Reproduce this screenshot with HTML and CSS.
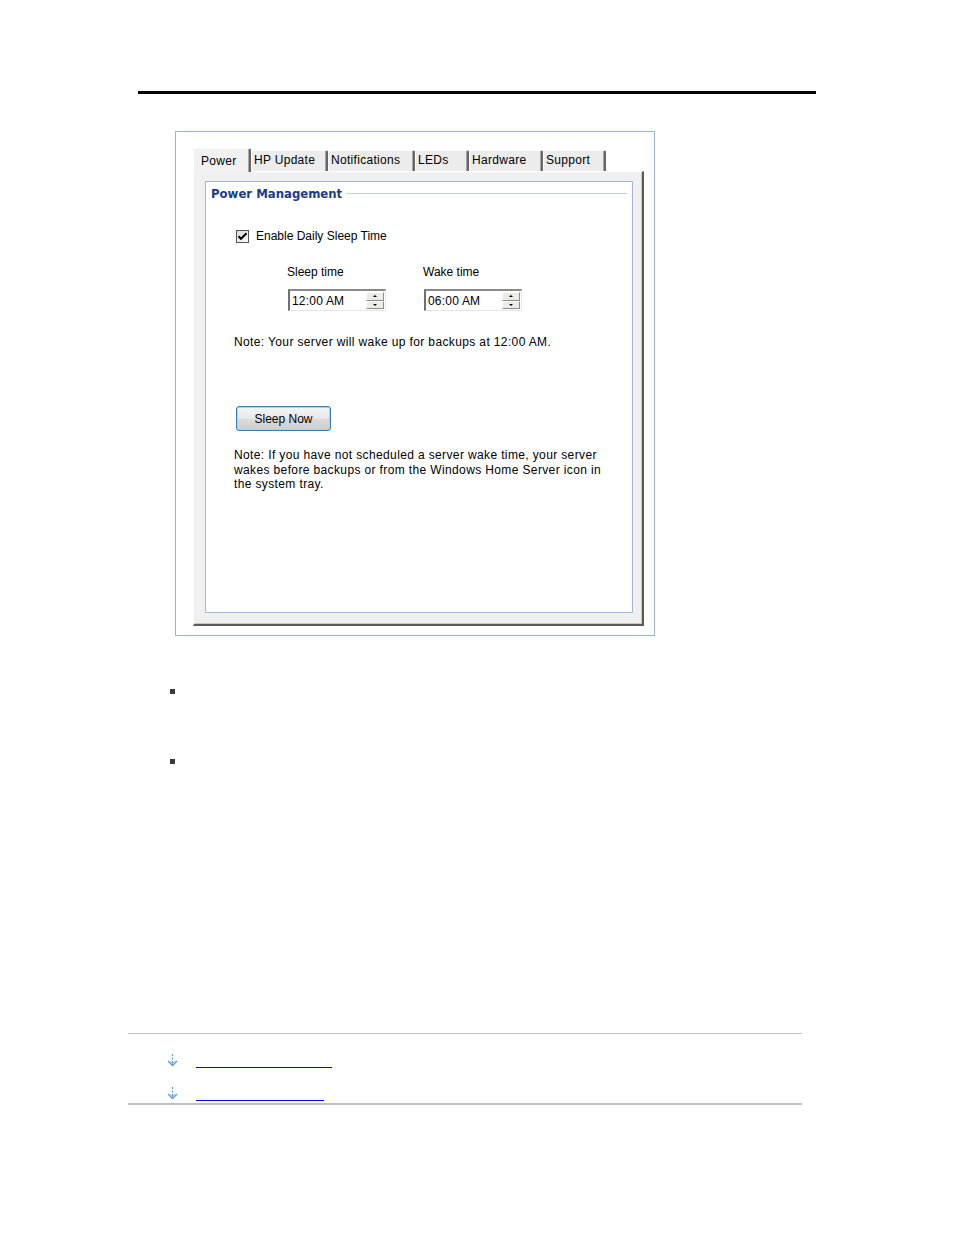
FILE: index.html
```html
<!DOCTYPE html>
<html>
<head>
<meta charset="utf-8">
<link rel="stylesheet" href="styles.css">
</head>
<body>
<div class="top-rule"></div>

<div class="shot">
  <div class="tabs">
    <div class="tab tab-active tab-power">Power</div>
    <div class="tab tab-hp">HP Update</div>
    <div class="tab tab-notif">Notifications</div>
    <div class="tab tab-leds">LEDs</div>
    <div class="tab tab-hw">Hardware</div>
    <div class="tab tab-sup">Support</div>
  </div>
  <div class="panel">
    <div class="group">
      <div class="group-title"><span class="group-title-text">Power Management</span><span class="group-title-line"></span></div>

      <div class="check-row">
        <span class="checkbox">
          <svg width="11" height="11" viewBox="0 0 11 11"><path d="M1.5 5.2 L4 7.8 L9.5 2.2" fill="none" stroke="#000" stroke-width="2"/></svg>
        </span>
        <span>Enable Daily Sleep Time</span>
      </div>

      <div class="time-labels">
        <span class="time-col">Sleep time</span>
        <span class="time-col">Wake time</span>
      </div>

      <div class="time-row">
        <div class="time-col">
          <div class="spin">
            <span class="spin-value">12:00 AM</span>
            <span class="spin-btns">
              <span class="spin-btn"><span class="tri-up"></span></span>
              <span class="spin-btn"><span class="tri-down"></span></span>
            </span>
          </div>
        </div>
        <div class="time-col">
          <div class="spin">
            <span class="spin-value">06:00 AM</span>
            <span class="spin-btns">
              <span class="spin-btn"><span class="tri-up"></span></span>
              <span class="spin-btn"><span class="tri-down"></span></span>
            </span>
          </div>
        </div>
      </div>

      <p class="note1">Note: Your server will wake up for backups at 12:00 AM.</p>

      <div class="btn-row"><span class="btn">Sleep Now</span></div>

      <p class="note2">Note: If you have not scheduled a server wake time, your server<br>wakes before backups or from the Windows Home Server icon in<br>the system tray.</p>
    </div>
  </div>
</div>

<ul class="bullets">
  <li class="bullet bullet-1"></li>
  <li class="bullet bullet-2"></li>
</ul>

<div class="footer">
  <div class="foot-row foot-row-1">
    <svg class="arrow" width="11" height="13" viewBox="0 0 11 13"><path d="M5.5 0 V2 M5.5 3.5 V5.5 M5.5 7 V11" stroke="#5b9bd5" stroke-width="1.2" fill="none"/><path d="M1 7 L5.5 11.5 L10 7" stroke="#5b9bd5" stroke-width="1.3" fill="none"/><path d="M3 7 L5.5 9.5 L8 7" stroke="#a9cdee" stroke-width="1" fill="none"/></svg>
    <a class="link link-1" href="#"></a>
  </div>
  <div class="foot-row foot-row-2">
    <svg class="arrow" width="11" height="13" viewBox="0 0 11 13"><path d="M5.5 0 V2 M5.5 3.5 V5.5 M5.5 7 V11" stroke="#5b9bd5" stroke-width="1.2" fill="none"/><path d="M1 7 L5.5 11.5 L10 7" stroke="#5b9bd5" stroke-width="1.3" fill="none"/><path d="M3 7 L5.5 9.5 L8 7" stroke="#a9cdee" stroke-width="1" fill="none"/></svg>
    <a class="link link-2" href="#"></a>
  </div>
</div>
</body>
</html>
```

FILE: styles.css
```css
* { box-sizing: border-box; }
html, body { margin: 0; padding: 0; }
body {
  width: 954px;
  height: 1235px;
  background: #fff;
  font-family: "Liberation Sans", Arial, sans-serif;
  font-size: 12px;
  color: #000;
  overflow: hidden;
}

.top-rule {
  margin: 91px 0 0 138px;
  width: 678px;
  height: 3px;
  background: #000;
}

.shot {
  margin: 37px 0 0 175px;
  width: 480px;
  height: 505px;
  border: 1px solid #9db4cf;
  padding: 16px 0 0 17px;
  background: #fff;
}

.tabs {
  display: flex;
  height: 23px;
  align-items: flex-end;
  position: relative;
  z-index: 2;
}
.tab {
  height: 21px;
  background: #ececec;
  border-top: 1px solid #fff;
  border-left: 1px solid #fff;
  border-right: 2px solid #666;
  box-shadow: inset -1px 0 0 #a8a8a8;
  padding: 2px 0 0 2px;
  line-height: 14px;
  letter-spacing: 0.3px;
  white-space: nowrap;
  border-radius: 2px 2px 0 0;
}
.tab-active {
  height: 24px;
  margin-bottom: -1px;
  background: #f1f1f1;
  padding: 5px 0 0 7px;
}
.tab-power { width: 58px; }
.tab-hp { width: 77px; }
.tab-notif { width: 87px; }
.tab-leds { width: 54px; }
.tab-hw { width: 74px; }
.tab-sup { width: 63px; }

.panel {
  width: 451px;
  height: 455px;
  background: #f0f0f0;
  border-top: 1px solid #fff;
  border-left: 1px solid #fff;
  border-right: 2px solid #5a5a5a;
  border-bottom: 2px solid #5a5a5a;
  box-shadow: inset -1px -1px 0 #c9c7c0;
  padding: 9px 0 0 11px;
}

.group {
  width: 428px;
  height: 432px;
  background: #fff;
  border: 1px solid #a3b8d2;
  padding: 5px 0 0 0;
}

.group-title {
  display: flex;
  align-items: center;
  height: 14px;
  padding-left: 5px;
  padding-right: 5px;
}
.group-title-text {
  font-family: "DejaVu Sans", Verdana, sans-serif;
  font-weight: bold;
  font-size: 11.7px;
  color: #1b3a88;
  white-space: nowrap;
  line-height: 14px;
}
.group-title-line {
  flex: 1;
  height: 1px;
  background: #bcd0e6;
  margin-left: 4px;
  margin-top: -1px;
}

.check-row {
  display: flex;
  align-items: center;
  height: 14px;
  margin-top: 28px;
  padding-left: 30px;
  gap: 7px;
  line-height: 14px;
}
.checkbox {
  width: 13px;
  height: 13px;
  border: 1px solid #555;
  background: linear-gradient(135deg, #dcdcd6, #fbfbfb);
  display: flex;
  align-items: center;
  justify-content: center;
}

.time-labels, .time-row {
  display: flex;
  padding-left: 81px;
}
.time-labels {
  margin-top: 22px;
  line-height: 14px;
  height: 14px;
}
.time-col { width: 136px; }
.time-row {
  margin-top: 10px;
}
.time-row .time-col { padding-left: 1px; }

.spin {
  width: 98px;
  height: 22px;
  display: flex;
  align-items: center;
  border-top: 2px solid #8a8a8a;
  border-left: 2px solid #6f6f6f;
  border-right: 1px solid #e6e6e6;
  border-bottom: 1px solid #e6e6e6;
  background: #fff;
  padding-left: 2px;
}
.spin-value { flex: 1; line-height: 14px; letter-spacing: 0.2px; }
.spin-btns {
  display: flex;
  flex-direction: column;
  width: 18px;
  height: 17px;
  margin-right: 1px;
}
.spin-btn {
  flex: 1;
  background: #ecebe6;
  border-top: 1px solid #fff;
  border-left: 1px solid #fff;
  border-right: 1px solid #8c8c8c;
  border-bottom: 1px solid #8c8c8c;
  display: flex;
  align-items: center;
  justify-content: center;
}
.tri-up {
  width: 0; height: 0;
  border-left: 2px solid transparent;
  border-right: 2px solid transparent;
  border-bottom: 2px solid #000;
}
.tri-down {
  width: 0; height: 0;
  border-left: 2px solid transparent;
  border-right: 2px solid transparent;
  border-top: 2px solid #000;
}

.note1 {
  margin: 24px 0 0 28px;
  line-height: 15px;
  letter-spacing: 0.37px;
}

.btn-row {
  margin-top: 56px;
  padding-left: 30px;
  height: 24px;
}
.btn {
  display: flex;
  align-items: center;
  justify-content: center;
  width: 95px;
  height: 25px;
  border: 1px solid #3c7fb1;
  border-radius: 3px;
  background: linear-gradient(#f5f5f5, #e8e8e8 50%, #dadada 51%, #cfcfcf);
  box-shadow: inset 0 0 0 1px #9ed7f5;
  line-height: 14px;
}

.note2 {
  margin: 18px 0 0 28px;
  line-height: 14.5px;
  letter-spacing: 0.37px;
}

.bullets {
  list-style: none;
  margin: 53px 0 0 170px;
  padding: 0;
}
.bullet {
  width: 5px;
  height: 5px;
  background: #3a3a3a;
}
.bullet-2 { margin-top: 65px; }

.footer {
  margin: 269px 0 0 128px;
  width: 674px;
  height: 72px;
  border-top: 1px solid #c4c4c4;
  border-bottom: 2px solid #c0c0c0;
}
.foot-row {
  display: flex;
  align-items: flex-end;
  padding-left: 39px;
  height: 13px;
}
.foot-row-1 { margin-top: 20px; }
.foot-row-2 { margin-top: 20px; }
.arrow { display: block; }
.link {
  display: block;
  height: 1px;
  background: #0000ee;
  margin-left: 18px;
  margin-bottom: -1px;
}
.link-1 { width: 136px; }
.link-2 { width: 128px; }
```
